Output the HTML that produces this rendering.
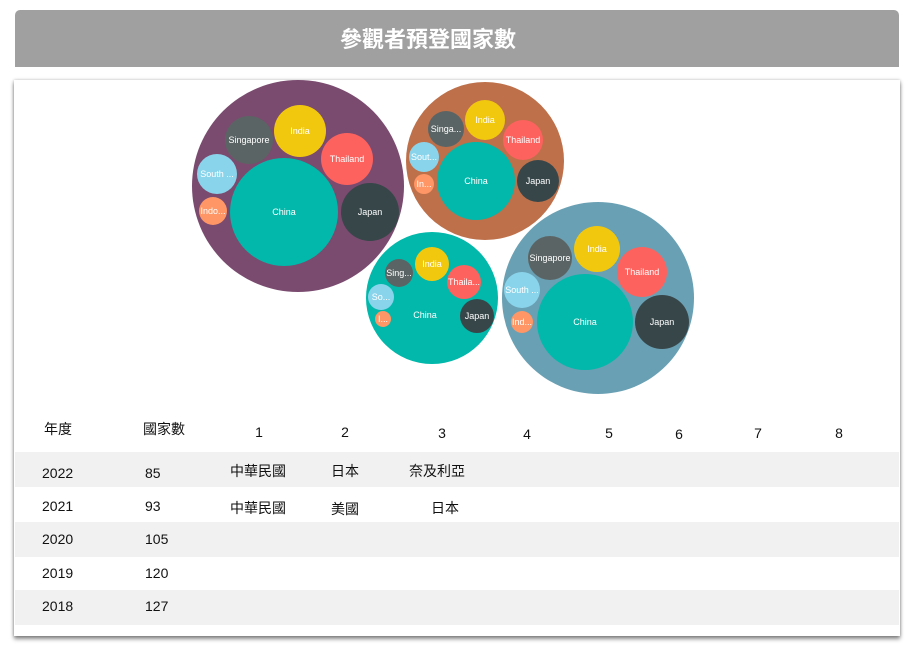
<!DOCTYPE html>
<html><head><meta charset="utf-8"><style>
body{margin:0;width:912px;height:655px;background:#fff;position:relative;overflow:hidden;font-family:"Liberation Sans","Noto Sans CJK TC",sans-serif;}
.hdr{position:absolute;left:15px;top:10px;width:884px;height:57px;background:#a0a0a0;border-radius:5px 5px 0 0;}
.ttl{position:absolute;left:428px;top:22px;transform:translateX(-50%);color:#fff;font-weight:bold;font-size:22px;white-space:nowrap;}
.card{position:absolute;left:14px;top:80px;width:886px;height:556px;background:#fff;box-shadow:0 3px 4px rgba(0,0,0,.45),0 0 3px rgba(0,0,0,.25);}
.band{position:absolute;left:15px;width:884px;height:35px;background:#f1f1f1;}
.t{position:absolute;font-size:14px;color:#111;transform:translateX(-50%);white-space:nowrap;}
.l{position:absolute;font-size:14px;color:#111;white-space:nowrap;}
svg{position:absolute;left:0;top:0;}
svg text{font-family:"Liberation Sans",sans-serif;fill:#fff;font-size:9px;text-anchor:middle;dominant-baseline:central;}
</style></head><body>
<div class="hdr"></div>
<div class="ttl">參觀者預登國家數</div>
<div class="card"></div>
<svg width="912" height="655">
<circle cx="298" cy="186" r="106" fill="#7a4b6f"/>
<circle cx="284" cy="212" r="54" fill="#01b8aa"/><text x="284" y="212">China</text>
<circle cx="249" cy="140" r="24" fill="#5b6464"/><text x="249" y="140">Singapore</text>
<circle cx="300" cy="131" r="26" fill="#f2c80f"/><text x="300" y="131">India</text>
<circle cx="347" cy="159" r="26" fill="#fd625e"/><text x="347" y="159">Thailand</text>
<circle cx="217" cy="174" r="20" fill="#8ad4eb"/><text x="217" y="174">South ...</text>
<circle cx="213" cy="211" r="14" fill="#fe9666"/><text x="213" y="211">Indo...</text>
<circle cx="370" cy="212" r="29" fill="#374649"/><text x="370" y="212">Japan</text>

<circle cx="485" cy="161" r="79" fill="#bd704a"/>
<circle cx="476" cy="181" r="39" fill="#01b8aa"/><text x="476" y="181">China</text>
<circle cx="446" cy="129" r="18" fill="#5b6464"/><text x="446" y="129">Singa...</text>
<circle cx="485" cy="120" r="20" fill="#f2c80f"/><text x="485" y="120">India</text>
<circle cx="523" cy="140" r="20" fill="#fd625e"/><text x="523" y="140">Thailand</text>
<circle cx="424" cy="157" r="15" fill="#8ad4eb"/><text x="424" y="157">Sout...</text>
<circle cx="424" cy="184" r="10" fill="#fe9666"/><text x="424" y="184">In...</text>
<circle cx="538" cy="181" r="21" fill="#374649"/><text x="538" y="181">Japan</text>

<circle cx="432" cy="298" r="66" fill="#01b8aa"/>
<text x="425" y="315">China</text>
<circle cx="399" cy="273" r="14" fill="#5b6464"/><text x="399" y="273">Sing...</text>
<circle cx="432" cy="264" r="17" fill="#f2c80f"/><text x="432" y="264">India</text>
<circle cx="464" cy="282" r="17" fill="#fd625e"/><text x="464" y="282">Thaila...</text>
<circle cx="381" cy="297" r="13" fill="#8ad4eb"/><text x="381" y="297">So...</text>
<circle cx="383" cy="319" r="8" fill="#fe9666"/><text x="383" y="319">I...</text>
<circle cx="477" cy="316" r="17" fill="#374649"/><text x="477" y="316">Japan</text>

<circle cx="598" cy="298" r="96" fill="#6aa0b3"/>
<circle cx="585" cy="322" r="48" fill="#01b8aa"/><text x="585" y="322">China</text>
<circle cx="550" cy="258" r="22" fill="#5b6464"/><text x="550" y="258">Singapore</text>
<circle cx="597" cy="249" r="23" fill="#f2c80f"/><text x="597" y="249">India</text>
<circle cx="642" cy="272" r="25" fill="#fd625e"/><text x="642" y="272">Thailand</text>
<circle cx="522" cy="290" r="18" fill="#8ad4eb"/><text x="522" y="290">South ...</text>
<circle cx="522" cy="322" r="11" fill="#fe9666"/><text x="522" y="322">Ind...</text>
<circle cx="662" cy="322" r="27" fill="#374649"/><text x="662" y="322">Japan</text>
</svg>
<div class="band" style="top:452px"></div>
<div class="band" style="top:522px"></div>
<div class="band" style="top:590px"></div>
<div class="t" style="left:58px;top:419px">年度</div>
<div class="t" style="left:164px;top:419px">國家數</div>
<div class="t" style="left:259px;top:424px">1</div>
<div class="t" style="left:345px;top:424px">2</div>
<div class="t" style="left:442px;top:425px">3</div>
<div class="t" style="left:527px;top:426px">4</div>
<div class="t" style="left:609px;top:425px">5</div>
<div class="t" style="left:679px;top:426px">6</div>
<div class="t" style="left:758px;top:425px">7</div>
<div class="t" style="left:839px;top:425px">8</div>
<div class="l" style="left:42px;top:465px">2022</div><div class="l" style="left:145px;top:465px">85</div>
<div class="t" style="left:258px;top:461px">中華民國</div><div class="t" style="left:345px;top:461px">日本</div><div class="t" style="left:437px;top:461px">奈及利亞</div>
<div class="l" style="left:42px;top:498px">2021</div><div class="l" style="left:145px;top:498px">93</div>
<div class="t" style="left:258px;top:498px">中華民國</div><div class="t" style="left:345px;top:499px">美國</div><div class="t" style="left:445px;top:498px">日本</div>
<div class="l" style="left:42px;top:531px">2020</div><div class="l" style="left:145px;top:531px">105</div>
<div class="l" style="left:42px;top:565px">2019</div><div class="l" style="left:145px;top:565px">120</div>
<div class="l" style="left:42px;top:598px">2018</div><div class="l" style="left:145px;top:598px">127</div>
</body></html>
